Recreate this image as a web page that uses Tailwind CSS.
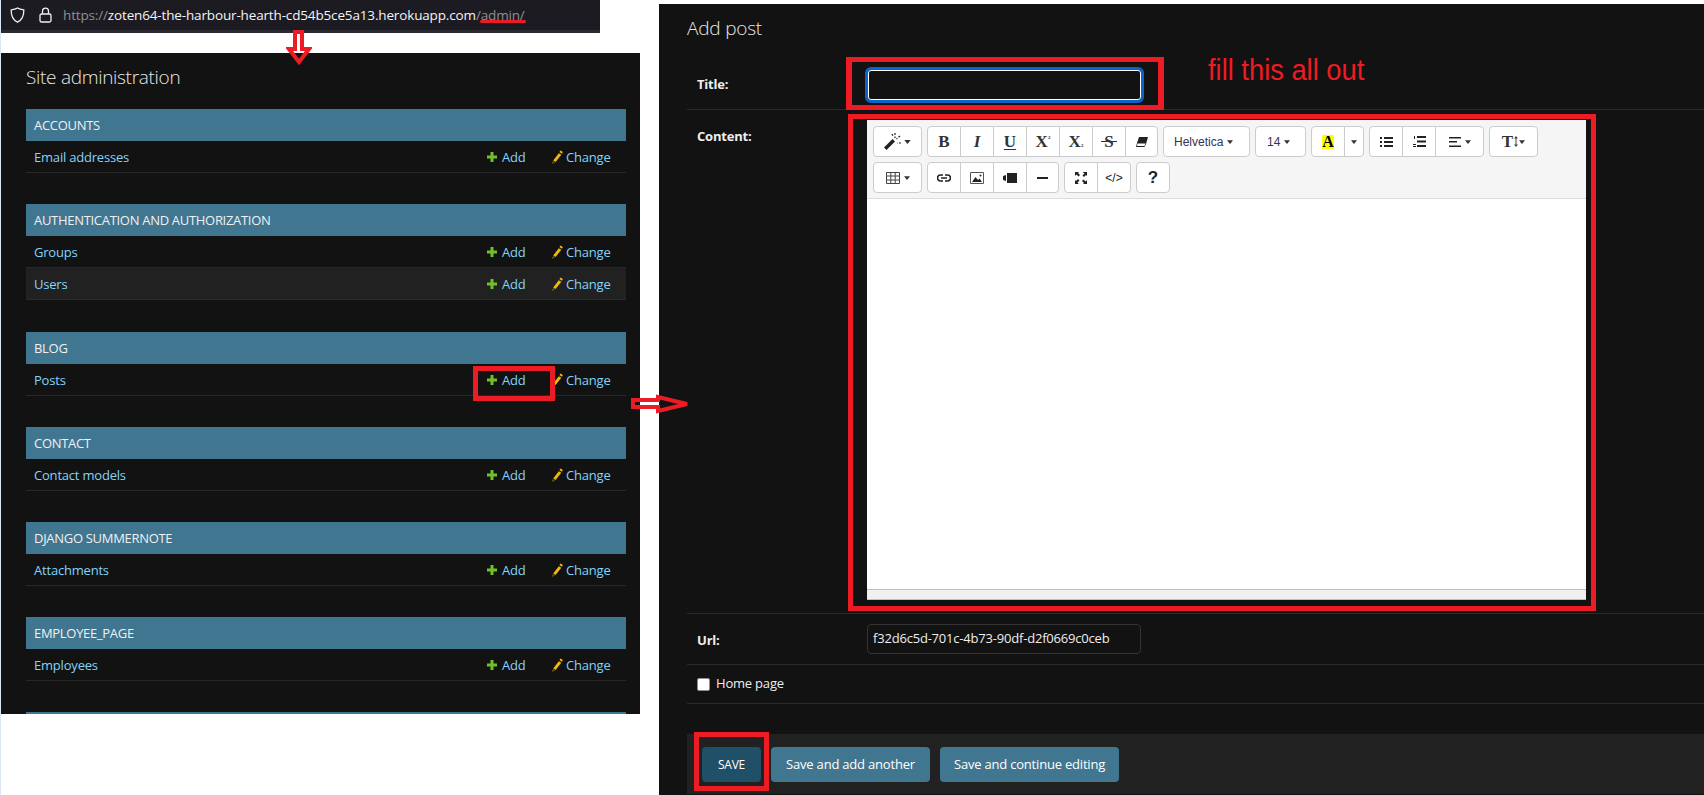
<!DOCTYPE html>
<html lang="en">

<head>
    <meta charset="UTF-8">
    <title>Add post walkthrough</title>
    <meta name="viewport" content="width=device-width, initial-scale=1.0">
    <script src="https://cdn.jsdelivr.net/npm/@tailwindcss/browser@4"></script>
</head>

<body class="relative w-[1704px] h-[795px] overflow-hidden bg-white font-['Open_Sans',sans-serif] text-[13px] tracking-[-0.2px] text-[#eeeeee]">
    <svg class="hidden">
        <symbol id="plus" viewBox="0 0 12 12"><path fill="#70bf2b" d="M4.200 0h3.600v4.200H12v3.600H7.800V12H4.200V7.800H0V4.200h4.200z"/></symbol>
        <symbol id="pencil" viewBox="0 0 12 14"><path fill="#efb80b" d="M9.500.5l2.400 1.600-1 1.600-2.500-1.600zM7.800 3.200l2.500 1.600L4.600 12 2.200 10.400z"/><path fill="#7a5c00" d="M1.800 11l2.200 1.500L1 14z"/></symbol>
        <symbol id="caret" viewBox="0 0 8 5"><path fill="#333" d="M0 0h8L4 5z"/></symbol>
    </svg>

    <div class="absolute left-0 top-0 w-px h-full bg-[#dbe6f5]"></div>

    <!-- browser url bar -->
    <div class="absolute left-px top-0 w-[599px] h-[33px] bg-[#1c1b22] border-b-[3px] border-[#2b2a33] flex items-center">
        <svg class="ml-[9px] w-[15px] h-[16px] shrink-0" viewBox="0 0 15 16" fill="none" stroke="#f0f0f3" stroke-width="1.300"><path d="M7.500 1C5.500 2.300 3.500 2.600 1.200 2.800c-.2 5.500 1.500 10 6.300 12.400 4.800-2.400 6.500-6.900 6.300-12.400C11.500 2.600 9.500 2.300 7.500 1z"/></svg>
        <svg class="ml-[14px] w-[13px] h-[16px] shrink-0" viewBox="0 0 13 16" fill="none" stroke="#f0f0f3" stroke-width="1.300"><rect x="1" y="7" width="11" height="8" rx="1.500"/><path d="M3.500 7V4.200a3 3 0 0 1 6 0V7"/></svg>
        <div class="ml-[11px] text-[13.500px] tracking-[-0.15px] whitespace-nowrap text-[#8f8f94]">https://<span class="text-[#f4f4f6]">zoten64-the-harbour-hearth-cd54b5ce5a13.herokuapp.com</span>/admin/</div>
    </div>

    <!-- site administration -->
    <div class="absolute left-px top-[53px] w-[639px] h-[661px] overflow-hidden bg-[#121212] pl-[25px] pr-[14px]">
        <h1 class="h-[56px] pb-[8px] flex items-center text-[19px] tracking-[-0.3px] font-light text-[#e8e8e8]">Site administration</h1>

        <div class="mb-[31px]">
            <div class="h-[32px] flex items-center px-[8px] pt-[2px] bg-[#417690] uppercase tracking-[-0.3px] text-[#f0f0f0]">Accounts</div>
            <div class="h-[32px] flex items-center pl-[8px] pr-[17px] pt-[3px] border-b border-[#272727] text-[#81d4fa]">
                <span class="flex-1">Email addresses</span>
                <span class="w-[64px] flex items-center"><svg class="w-[10px] h-[10px] shrink-0 mr-[5px] -mt-[3px]"><use href="#plus"/></svg>Add</span>
                <span class="w-[58px] flex items-center whitespace-nowrap"><svg class="w-[12px] h-[14px] shrink-0 mr-[3px] -mt-[3px]"><use href="#pencil"/></svg>Change</span>
            </div>
        </div>

        <div class="mb-[32px]">
            <div class="h-[32px] flex items-center px-[8px] pt-[2px] bg-[#417690] uppercase tracking-[-0.3px] text-[#f0f0f0]">Authentication and Authorization</div>
            <div class="h-[32px] flex items-center pl-[8px] pr-[17px] pt-[3px] border-b border-[#272727] text-[#81d4fa]">
                <span class="flex-1">Groups</span>
                <span class="w-[64px] flex items-center"><svg class="w-[10px] h-[10px] shrink-0 mr-[5px] -mt-[3px]"><use href="#plus"/></svg>Add</span>
                <span class="w-[58px] flex items-center whitespace-nowrap"><svg class="w-[12px] h-[14px] shrink-0 mr-[3px] -mt-[3px]"><use href="#pencil"/></svg>Change</span>
            </div>
            <div class="h-[32px] flex items-center pl-[8px] pr-[17px] pt-[3px] border-b border-[#2c2c2c] bg-[#212121] text-[#81d4fa]">
                <span class="flex-1">Users</span>
                <span class="w-[64px] flex items-center"><svg class="w-[10px] h-[10px] shrink-0 mr-[5px] -mt-[3px]"><use href="#plus"/></svg>Add</span>
                <span class="w-[58px] flex items-center whitespace-nowrap"><svg class="w-[12px] h-[14px] shrink-0 mr-[3px] -mt-[3px]"><use href="#pencil"/></svg>Change</span>
            </div>
        </div>

        <div class="mb-[31px]">
            <div class="h-[32px] flex items-center px-[8px] pt-[2px] bg-[#417690] uppercase tracking-[-0.3px] text-[#f0f0f0]">Blog</div>
            <div class="h-[32px] flex items-center pl-[8px] pr-[17px] pt-[3px] border-b border-[#272727] text-[#81d4fa]">
                <span class="flex-1">Posts</span>
                <span class="w-[64px] flex items-center"><svg class="w-[10px] h-[10px] shrink-0 mr-[5px] -mt-[3px]"><use href="#plus"/></svg>Add</span>
                <span class="w-[58px] flex items-center whitespace-nowrap"><svg class="w-[12px] h-[14px] shrink-0 mr-[3px] -mt-[3px]"><use href="#pencil"/></svg>Change</span>
            </div>
        </div>

        <div class="mb-[31px]">
            <div class="h-[32px] flex items-center px-[8px] pt-[2px] bg-[#417690] uppercase tracking-[-0.3px] text-[#f0f0f0]">Contact</div>
            <div class="h-[32px] flex items-center pl-[8px] pr-[17px] pt-[3px] border-b border-[#272727] text-[#81d4fa]">
                <span class="flex-1">Contact models</span>
                <span class="w-[64px] flex items-center"><svg class="w-[10px] h-[10px] shrink-0 mr-[5px] -mt-[3px]"><use href="#plus"/></svg>Add</span>
                <span class="w-[58px] flex items-center whitespace-nowrap"><svg class="w-[12px] h-[14px] shrink-0 mr-[3px] -mt-[3px]"><use href="#pencil"/></svg>Change</span>
            </div>
        </div>

        <div class="mb-[31px]">
            <div class="h-[32px] flex items-center px-[8px] pt-[2px] bg-[#417690] uppercase tracking-[-0.3px] text-[#f0f0f0]">Django Summernote</div>
            <div class="h-[32px] flex items-center pl-[8px] pr-[17px] pt-[3px] border-b border-[#272727] text-[#81d4fa]">
                <span class="flex-1">Attachments</span>
                <span class="w-[64px] flex items-center"><svg class="w-[10px] h-[10px] shrink-0 mr-[5px] -mt-[3px]"><use href="#plus"/></svg>Add</span>
                <span class="w-[58px] flex items-center whitespace-nowrap"><svg class="w-[12px] h-[14px] shrink-0 mr-[3px] -mt-[3px]"><use href="#pencil"/></svg>Change</span>
            </div>
        </div>

        <div class="mb-[31px]">
            <div class="h-[32px] flex items-center px-[8px] pt-[2px] bg-[#417690] uppercase tracking-[-0.3px] text-[#f0f0f0]">Employee_page</div>
            <div class="h-[32px] flex items-center pl-[8px] pr-[17px] pt-[3px] border-b border-[#272727] text-[#81d4fa]">
                <span class="flex-1">Employees</span>
                <span class="w-[64px] flex items-center"><svg class="w-[10px] h-[10px] shrink-0 mr-[5px] -mt-[3px]"><use href="#plus"/></svg>Add</span>
                <span class="w-[58px] flex items-center whitespace-nowrap"><svg class="w-[12px] h-[14px] shrink-0 mr-[3px] -mt-[3px]"><use href="#pencil"/></svg>Change</span>
            </div>
        </div>

        <div class="h-[32px] bg-[#417690]"></div>
    </div>

    <!-- add post form -->
    <div class="absolute left-[659px] top-[4px] right-0 bottom-0 bg-[#121212] pl-[28px]">
        <h1 class="h-[48px] flex items-center text-[19px] font-light text-[#e8e8e8]">Add post</h1>

        <div class="h-[58px] flex pl-[10px] border-b border-[#2a2a2a]">
            <label class="w-[170px] pt-[23px] font-bold">Title:</label>
            <div class="mt-[15px] -ml-[2px] w-[279px] h-[36px] rounded-[6px] border-[3px] border-[#0b63ce] outline outline-1 -outline-offset-4 outline-white bg-[#121212]"></div>
        </div>

        <div class="h-[504px] flex pl-[10px] border-b border-[#2a2a2a]">
            <label class="w-[170px] pt-[17px] font-bold">Content:</label>
            <div class="mt-[10px] w-[719px] h-[480px] flex flex-col bg-white tracking-normal text-[#333333] font-['Liberation_Sans',sans-serif]">
                <div class="h-[79px] px-[6px] pt-[6px] flex flex-col gap-[5px] bg-[#f5f5f5] border-b border-[#dddddd]">
                    <div class="flex gap-[5px] h-[31px]">
                        <div class="w-[49px] flex items-center justify-center gap-[3px] bg-white border border-[#cccccc] rounded-[4px]">
                            <svg class="w-[17px] h-[17px] shrink-0" viewBox="0 0 17 17"><path fill="#222" d="M0 14.500L8.500 6l2.500 2.500L2.500 17z"/><path stroke="#222" stroke-width="1.200" stroke-dasharray="2 1.500" fill="none" d="M11 0v5M16 3l-3.500 3M17 10h-4M8 1l1.500 3"/></svg>
                            <svg class="w-[7px] h-[4px] shrink-0"><use href="#caret"/></svg>
                        </div>
                        <div class="flex bg-white border border-[#cccccc] rounded-[4px] divide-x divide-[#cccccc] text-[#333333] font-['Liberation_Serif',serif] font-bold text-[17px]">
                            <div class="w-[33px] flex items-center justify-center">B</div>
                            <div class="w-[33px] flex items-center justify-center italic">I</div>
                            <div class="w-[33px] flex items-center justify-center"><span class="underline underline-offset-2">U</span></div>
                            <div class="w-[33px] flex items-center justify-center">X<span class="text-[5px] -mt-[8px]">2</span></div>
                            <div class="w-[33px] flex items-center justify-center">X<span class="text-[5px] mt-[8px]">2</span></div>
                            <div class="w-[33px] flex items-center justify-center relative">S<span class="absolute left-[8px] right-[8px] top-[14px] h-px bg-[#333333]"></span></div>
                            <div class="w-[31px] flex items-center justify-center">
                                <svg class="w-[12px] h-[10px]" viewBox="0 0 12 10"><path fill="#222" d="M3 0h9l-2 7-1.500 3H0l1-4z"/><path fill="#fff" d="M1.500 6.500h8L8.500 9H1z"/></svg>
                            </div>
                        </div>
                        <div class="w-[87px] flex items-center pl-[10px] gap-[4px] bg-white border border-[#cccccc] rounded-[4px] text-[12px] text-[#333355]">Helvetica <svg class="w-[6px] h-[4px] shrink-0"><use href="#caret"/></svg></div>
                        <div class="w-[51px] flex items-center pl-[11px] gap-[4px] bg-white border border-[#cccccc] rounded-[4px] text-[12px] text-[#333355]">14 <svg class="w-[6px] h-[4px] shrink-0"><use href="#caret"/></svg></div>
                        <div class="flex bg-white border border-[#cccccc] rounded-[4px] divide-x divide-[#cccccc]">
                            <div class="w-[33px] flex items-center justify-center"><span class="w-[12px] h-[14px] flex items-center justify-center bg-[#ffff00] text-black font-['Liberation_Serif',serif] font-bold text-[16px]">A</span></div>
                            <div class="w-[18px] flex items-center justify-center"><svg class="w-[6px] h-[4px] shrink-0"><use href="#caret"/></svg></div>
                        </div>
                        <div class="flex bg-white border border-[#cccccc] rounded-[4px] divide-x divide-[#cccccc]">
                            <div class="w-[33px] flex items-center justify-center">
                                <svg class="w-[13px] h-[10px]" viewBox="0 0 13 10" fill="#222"><path d="M0 0h2v2H0zM4 0h9v2H4zM0 4h2v2H0zM4 4h9v2H4zM0 8h2v2H0zM4 8h9v2H4z"/></svg>
                            </div>
                            <div class="w-[33px] flex items-center justify-center">
                                <svg class="w-[13px] h-[11px]" viewBox="0 0 13 11" fill="#222"><path d="M4 0h9v2H4zM4 4.500h9v2H4zM4 9h9v2H4zM1 0h1v3H1zM0 8h3v1H0zM0 10h3v1H0z"/></svg>
                            </div>
                            <div class="w-[47px] flex items-center justify-center gap-[4px]">
                                <svg class="w-[12px] h-[10px]" viewBox="0 0 12 10" fill="#222"><path d="M0 0h12v1.500H0zM0 4h8v1.500H0zM0 8.500h12V10H0z"/></svg>
                                <svg class="w-[6px] h-[4px] shrink-0"><use href="#caret"/></svg>
                            </div>
                        </div>
                        <div class="w-[49px] flex items-center justify-center bg-white border border-[#cccccc] rounded-[4px] font-['Liberation_Serif',serif] font-bold text-[17px] text-[#333333]">
                            T<svg class="w-[4px] h-[11px] shrink-0 ml-[1px] mr-px" viewBox="0 0 4 11" fill="#444"><path d="M2 0l2 2.500H2.500v6H4L2 11 0 8.500h1.500v-6H0z"/></svg><svg class="w-[6px] h-[4px] shrink-0"><use href="#caret"/></svg>
                        </div>
                    </div>
                    <div class="flex gap-[5px] h-[31px]">
                        <div class="w-[49px] flex items-center justify-center gap-[4px] bg-white border border-[#cccccc] rounded-[4px]">
                            <svg class="w-[14px] h-[12px] shrink-0" viewBox="0 0 14 12" fill="none" stroke="#444"><path d="M.5.500h13v11H.5zM.5 4h13M.5 8h13M4.800.500v11M9.200.500v11"/></svg>
                            <svg class="w-[6px] h-[4px] shrink-0"><use href="#caret"/></svg>
                        </div>
                        <div class="flex bg-white border border-[#cccccc] rounded-[4px] divide-x divide-[#cccccc]">
                            <div class="w-[33px] flex items-center justify-center">
                                <svg class="w-[14px] h-[8px]" viewBox="0 0 14 8" fill="none" stroke="#222" stroke-width="1.600"><path d="M6 1H3.500a3 3 0 0 0 0 6H6M8 1h2.500a3 3 0 0 1 0 6H8M4 4h6"/></svg>
                            </div>
                            <div class="w-[33px] flex items-center justify-center">
                                <svg class="w-[14px] h-[12px]" viewBox="0 0 14 12"><path fill="none" stroke="#555" d="M.5.500h13v11H.5z"/><path fill="#222" d="M2 10l3.500-5 2.500 3 1.500-1.500L12 10z"/><circle cx="10.500" cy="3.500" r="1" fill="#222"/></svg>
                            </div>
                            <div class="w-[33px] flex items-center justify-center">
                                <svg class="w-[14px] h-[10px]" viewBox="0 0 14 10" fill="#222"><path d="M4 0h10v10H4zM0 3l3-1v6L0 7z"/></svg>
                            </div>
                            <div class="w-[31px] flex items-center justify-center"><span class="w-[11px] h-[2px] bg-[#222222]"></span></div>
                        </div>
                        <div class="flex bg-white border border-[#cccccc] rounded-[4px] divide-x divide-[#cccccc]">
                            <div class="w-[33px] flex items-center justify-center">
                                <svg class="w-[12px] h-[12px]" viewBox="0 0 12 12" fill="#222"><path d="M0 0h4L3 1l2 2-1.500 1.500-2-2L.5 3.500 0 4zM12 0v4l-1-1-2 2L7.500 3.500l2-2L8 .5V0zM0 12V8l1 1 2-2 1.500 1.500-2 2 1 1V12zM12 12H8l1-1-2-2 1.500-1.500 2 2 1-1H12z"/></svg>
                            </div>
                            <div class="w-[32px] flex items-center justify-center text-[12px] text-[#222222]">&lt;/&gt;</div>
                        </div>
                        <div class="w-[34px] flex items-center justify-center bg-white border border-[#cccccc] rounded-[4px] font-bold text-[17px] text-[#222222]">?</div>
                    </div>
                </div>
                <div class="flex-1"></div>
                <div class="h-[11px] bg-[#f0f0f0] border-y border-[#c0c0c0]"></div>
            </div>
        </div>

        <div class="h-[51px] flex pl-[10px] border-b border-[#2a2a2a]">
            <label class="w-[170px] pt-[17px] font-bold">Url:</label>
            <div class="mt-[10px] w-[274px] h-[30px] flex items-center px-[5px] rounded-[4px] border border-[#333333] bg-[#121212]">f32d6c5d-701c-4b73-90df-d2f0669c0ceb</div>
        </div>

        <div class="h-[39px] flex pl-[10px] border-b border-[#2a2a2a]">
            <span class="mt-[13px] w-[13px] h-[13px] rounded-[2px] border border-[#8f8f9d] bg-white"></span>
            <span class="ml-[6px] mt-[8px] leading-[20px]">Home page</span>
        </div>

        <div class="mt-[30px] h-[60px] flex items-start gap-[10px] pl-[15px] pt-[13px] bg-[#212121] text-white">
            <div class="w-[59px] h-[35px] flex items-center justify-center rounded-[4px] bg-[#205067] text-[12px]">SAVE</div>
            <div class="w-[159px] h-[35px] flex items-center justify-center rounded-[4px] bg-[#417690]">Save and add another</div>
            <div class="w-[179px] h-[35px] flex items-center justify-center rounded-[4px] bg-[#417690]">Save and continue editing</div>
        </div>
    </div>

    <!-- red annotations -->
    <div class="absolute left-[480px] top-[20px] w-[46px] h-[3px] rounded-full bg-[#ed1c24]"></div>
    <div class="absolute left-[473px] top-[366px] w-[82px] h-[35px] border-[5px] border-[#ed1c24]"></div>
    <div class="absolute left-[846px] top-[57px] w-[318px] h-[53px] border-[5px] border-x-[6px] border-[#ed1c24]"></div>
    <div class="absolute left-[848px] top-[114px] w-[748px] h-[497px] border-[5px] border-[#ed1c24]"></div>
    <div class="absolute left-[694px] top-[732px] w-[75px] h-[59px] border-[5px] border-[#ed1c24]"></div>
    <div class="absolute left-[1208px] top-[52px] origin-left scale-x-[0.91] font-['Liberation_Sans',sans-serif] text-[30px] tracking-normal leading-[36px] whitespace-nowrap text-[#ed1c24]">fill this all out</div>
    <svg class="absolute left-[286px] top-[30px] w-[26px] h-[35px]" viewBox="0 0 26 35" fill="none" stroke="#ed1c24" stroke-width="4"><path d="M9 2h7v17h7L13 32 3 19h6z"/></svg>
    <svg class="absolute left-[630px] top-[392px] w-[62px] h-[24px]" viewBox="0 0 62 24" fill="none" stroke="#ed1c24" stroke-width="4"><path d="M3 8h25V5l29 7-29 7v-4H3z"/></svg>
</body>

</html>
